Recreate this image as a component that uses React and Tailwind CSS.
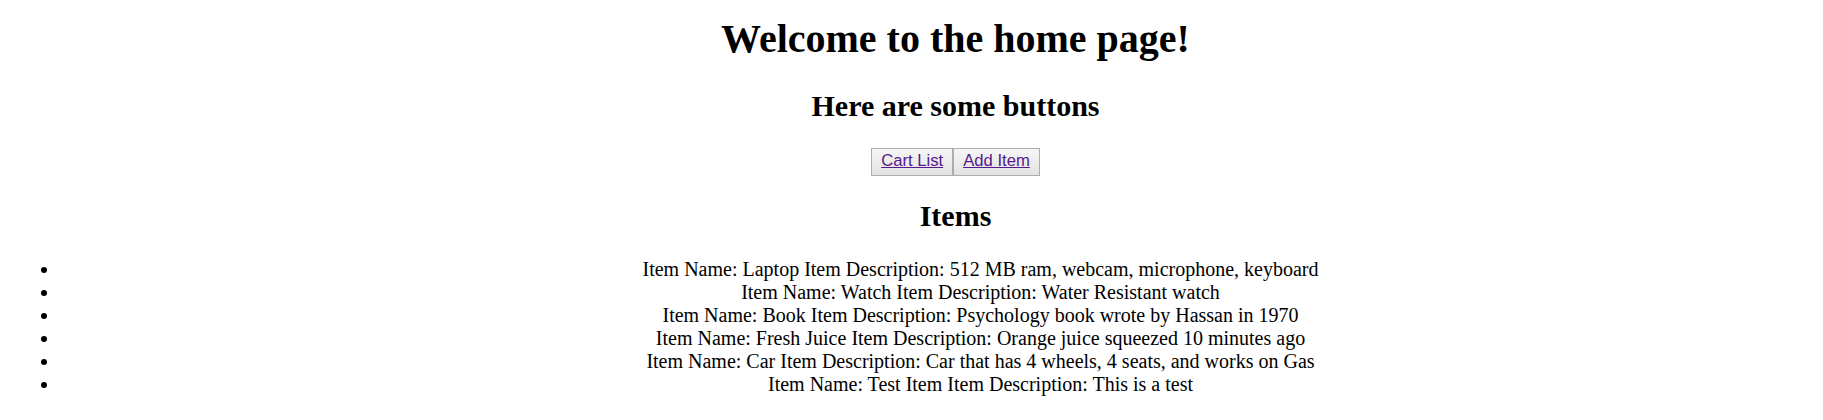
import React from 'react';

const items = [
  { name: 'Laptop', description: '512 MB ram, webcam, microphone, keyboard' },
  { name: 'Watch', description: 'Water Resistant watch' },
  { name: 'Book', description: 'Psychology book wrote by Hassan in 1970' },
  { name: 'Fresh Juice', description: 'Orange juice squeezed 10 minutes ago' },
  { name: 'Car', description: 'Car that has 4 wheels, 4 seats, and works on Gas' },
  { name: 'Test Item', description: 'This is a test' },
];

const NavButton = ({ label }) => (
  <button
    type="button"
    className="inline-flex items-center h-[28px] px-[9px] pb-[2px] border border-[#adadad] bg-gradient-to-b from-[#f6f6f6] to-[#e2e2e2] font-['Liberation_Sans',Arial,sans-serif] text-[16.67px] leading-[normal]"
  >
    <a href="#" className="text-[#551a8b] underline">{label}</a>
  </button>
);

const App = () => {
  return (
    <div className="w-full h-screen overflow-hidden bg-white text-black font-['Liberation_Serif','Times_New_Roman',serif]">
      {/* page is wider than the window, so the centre sits right of the middle */}
      <div className="w-[1911px] px-[10px] pt-[15px] text-center">
        <h1 className="text-[40px] font-bold leading-[normal]">Welcome to the home page!</h1>
        <h2 className="mt-[27px] text-[30px] font-bold leading-[normal]">Here are some buttons</h2>

        <div className="mt-[25px] flex justify-center">
          <NavButton label="Cart List" />
          <NavButton label="Add Item" />
        </div>

        <h2 className="mt-[23px] text-[30px] font-bold leading-[normal]">Items</h2>

        <ul className="mt-[25px] pl-[50px] list-disc list-outside text-[20px] leading-[23px]">
          {items.map((item) => (
            <li key={item.name}>
              Item Name: {item.name} Item Description: {item.description}
            </li>
          ))}
        </ul>
      </div>
    </div>
  );
};

export default App;
